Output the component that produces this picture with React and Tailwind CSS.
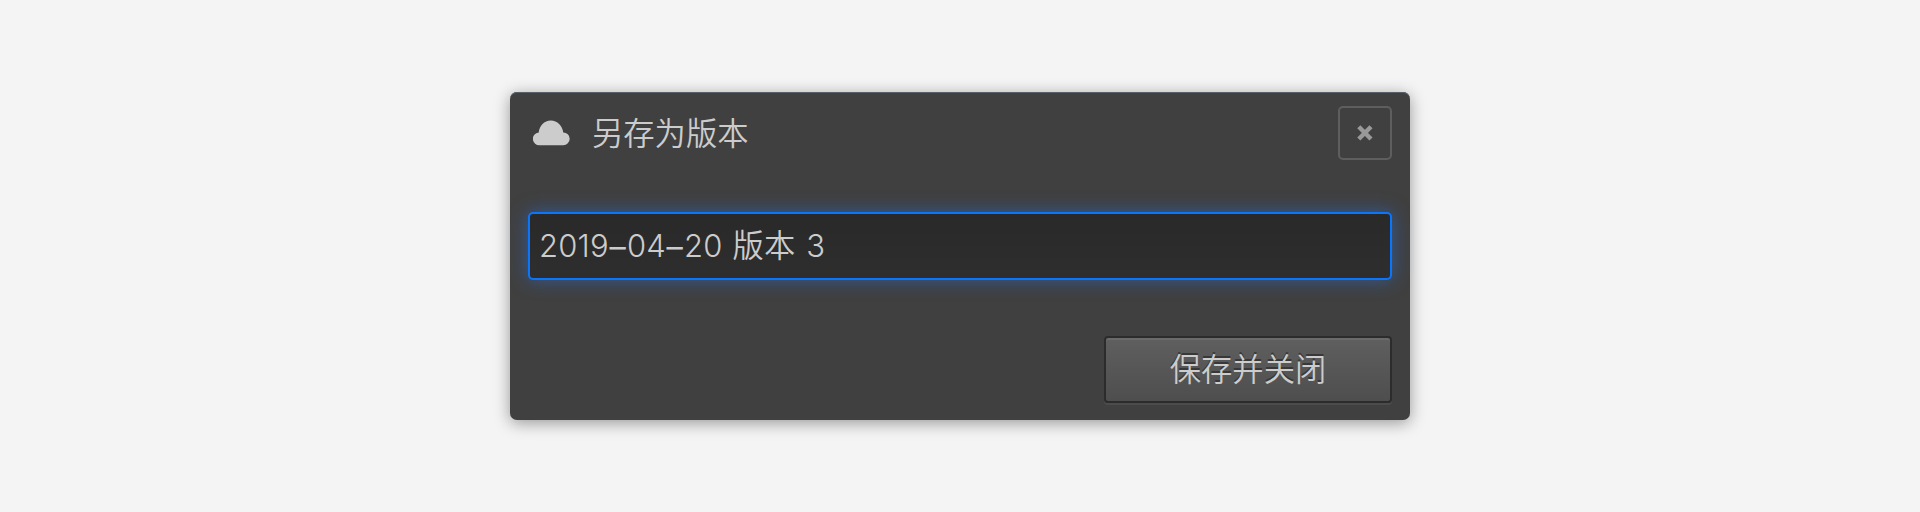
function CloudIcon() {
  return (
    <svg width="37" height="26" viewBox="0 0 37 26" fill="#cccccc" aria-hidden="true">
      <path d="M6.8 25.2A6.3 6.3 0 0 1 5.7 12.4C6.5 5.6 11.2 0.5 17.8 0.5S29.3 5.6 30.3 12.4A6.4 6.4 0 0 1 30.3 25.2Z" />
    </svg>
  );
}

function CloseIcon() {
  return (
    <svg width="18" height="18" viewBox="0 0 18 18" fill="none" stroke="#999999" strokeWidth="4.4" aria-hidden="true">
      <path d="M2.8 2.8 15 15M15 2.8 2.8 15" />
    </svg>
  );
}

function Dash() {
  return <span className="mx-[1.2px] inline-block translate-y-px scale-x-105 font-normal">–</span>;
}

export default function App() {
  return (
    <main className="flex h-[512px] w-full items-center justify-center bg-[#f4f4f4] font-['Noto_Sans_CJK_SC',sans-serif] text-[31.3px] font-[350] text-[#cccccc]">
      <section className="flex h-[328px] w-[900px] flex-col rounded-[7px] bg-[#404040] px-[18px] shadow-[inset_0_1px_0_#58616a,0_3px_16px_rgba(0,0,0,0.38)]">
        <header className="flex h-[120px] items-start justify-between pt-[14px]">
          <div className="flex h-[54px] items-center pl-[5px]">
            <CloudIcon />
            <h1 className="ml-[22px] pb-[2px] leading-[52px]">另存为版本</h1>
          </div>
          <button aria-label="关闭" className="flex size-[54px] items-center justify-center rounded-[5px] border-2 border-[#5e5e5e]">
            <CloseIcon />
          </button>
        </header>
        <div className="flex h-[68px] shrink-0 items-center rounded-[5px] border-2 border-[#0a76fc] bg-linear-to-b from-[#292929] to-[#2e2e2e] pl-[9px] font-[Inter,'Noto_Sans_CJK_SC',sans-serif] text-[31px] whitespace-pre shadow-[0_0_18px_rgba(35,115,240,0.5)]">
          <span className="tracking-[0.2px]">2019<Dash />04<Dash />20</span>
          <span className="ml-[10px] text-[31.3px]">版本</span>
          <span className="ml-[11px]">3</span>
        </div>
        <div className="mt-14 flex justify-end">
          <button className="flex h-[67px] w-[288px] items-center justify-center rounded-[4px] border-2 border-[#2c2c2c] bg-linear-to-b from-[#5f5f5f] to-[#4e4e4e] pb-[2px] shadow-[inset_0_2px_0_#6a6a6a,0_2px_0_#4c4c4c] [text-shadow:0_-2px_0_#383838]">
            保存并关闭
          </button>
        </div>
      </section>
    </main>
  );
}
